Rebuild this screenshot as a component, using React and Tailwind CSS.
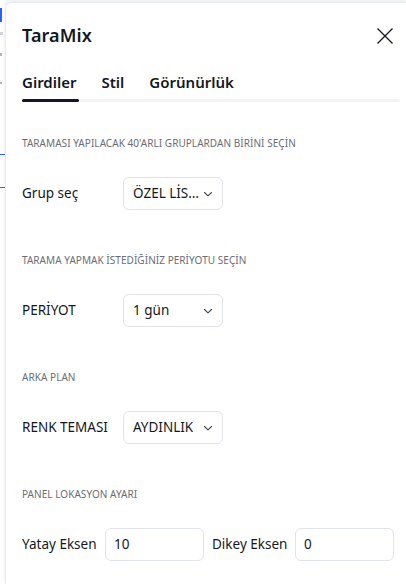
import React from "react";

function Chevron() {
  return (
    <svg width="18" height="18" viewBox="0 0 18 18" fill="none" className="text-[#434651]">
      <path d="M5.5 7.5 9 10.8l3.5-3.3" stroke="currentColor" strokeWidth="1.1" strokeLinecap="round" strokeLinejoin="round" />
    </svg>
  );
}

function Select({ value }) {
  return (
    <div className="flex h-[33px] w-[100px] items-center justify-between rounded-[6px] border border-[#e0e3eb] bg-white pl-[9px] pr-[5px] text-[13.5px] text-[#131722]">
      <span className="truncate">{value}</span>
      <Chevron />
    </div>
  );
}

function SectionLabel({ children }) {
  return <div className="text-[10px] uppercase leading-[14px] tracking-[0.05px] text-[#6a6d78]">{children}</div>;
}

export default function App() {
  return (
    <div
      className="flex h-[584px] w-[406px] overflow-hidden bg-[#f7f8fa]"
      style={{ fontFamily: '"Noto Sans", "Open Sans", sans-serif' }}
    >
      <div className="flex w-[5px] shrink-0 flex-col bg-white">
        <div className="mt-[8px] h-[14px] w-[2px] bg-[#2962ff]" />
        <div className="mt-[10px] h-[3px] w-[3px] bg-[#d1d4dc]" />
        <div className="mt-[18px] h-[3px] w-[2px] bg-[#b2b5be]" />
        <div className="mt-[26px] h-[2px] w-[2px] bg-[#b2b5be]" />
        <div className="mt-[70px] h-[1px] w-[5px] bg-[#2962ff]" />
        <div className="mt-[32px] h-[1px] w-[5px] bg-[#2962ff]" />
      </div>
      <div className="mt-[2px] flex flex-1 flex-col rounded-tl-[6px] border-l border-t border-[#e9ebf0] bg-white text-[#131722] shadow-[0_0_4px_rgba(0,0,0,0.08)]">
        <div className="flex h-[68px] items-center justify-between pb-[4px] pl-[16px] pr-[12px]">
          <div className="text-[18px] font-semibold tracking-[0.1px]">TaraMix</div>
          <svg width="18" height="18" viewBox="0 0 18 18" className="mt-[2px] text-[#131722]">
            <path d="M1.5 1.5l15 15M16.5 1.5l-15 15" stroke="currentColor" strokeWidth="1.3" />
          </svg>
        </div>
        <div className="pl-[16px] pr-[6px]">
          <div className="flex gap-[25px] text-[15px] font-semibold leading-[22px]">
            <span>Girdiler</span>
            <span>Stil</span>
            <span>Görünürlük</span>
          </div>
          <div className="mt-[6px] flex h-[3px] rounded-full bg-[#f0f3fa]">
            <div className="h-[3px] w-[57px] rounded-full bg-[#131722]" />
          </div>
        </div>
        <div className="flex flex-col pl-[16px] pr-[12px] pt-[34px]">
          <SectionLabel>TARAMASI YAPILACAK 40'ARLI GRUPLARDAN BİRİNİ SEÇİN</SectionLabel>
          <div className="mt-[27px] flex items-center text-[13.5px]">
            <span className="w-[101px]">Grup seç</span>
            <Select value="ÖZEL LİS..." />
          </div>
          <div className="mt-[43px]">
            <SectionLabel>TARAMA YAPMAK İSTEDİĞİNİZ PERİYOTU SEÇİN</SectionLabel>
          </div>
          <div className="mt-[27px] flex items-center text-[13.5px]">
            <span className="w-[101px]">PERİYOT</span>
            <Select value="1 gün" />
          </div>
          <div className="mt-[43px]">
            <SectionLabel>ARKA PLAN</SectionLabel>
          </div>
          <div className="mt-[27px] flex items-center text-[13.5px]">
            <span className="w-[101px]">RENK TEMASI</span>
            <Select value="AYDINLIK" />
          </div>
          <div className="mt-[43px]">
            <SectionLabel>PANEL LOKASYON AYARI</SectionLabel>
          </div>
          <div className="mt-[27px] flex items-center text-[13.5px]">
            <span className="w-[83px]">Yatay Eksen</span>
            <div className="flex h-[33px] w-[99px] items-center rounded-[6px] border border-[#e0e3eb] pl-[8px]">10</div>
            <span className="ml-[8px] w-[83px]">Dikey Eksen</span>
            <div className="flex h-[33px] w-[99px] items-center rounded-[6px] border border-[#e0e3eb] pl-[8px]">0</div>
          </div>
        </div>
      </div>
    </div>
  );
}
